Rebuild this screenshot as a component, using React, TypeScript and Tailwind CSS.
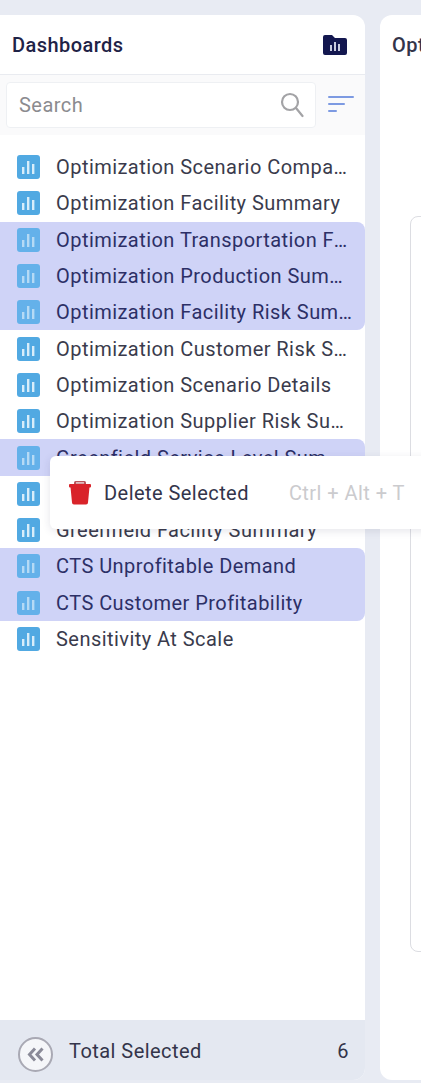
const DASHBOARDS = [
  { name: "Optimization Scenario Comparison", selected: false },
  { name: "Optimization Facility Summary", selected: false },
  { name: "Optimization Transportation Facilities", selected: true },
  { name: "Optimization Production Summary Report", selected: true },
  { name: "Optimization Facility Risk Summary Report", selected: true },
  { name: "Optimization Customer Risk Summary", selected: false },
  { name: "Optimization Scenario Details", selected: false },
  { name: "Optimization Supplier Risk Summary", selected: false },
  { name: "Greenfield Service Level Summary", selected: true },
  { name: "Greenfield Scenario Details", selected: false },
  { name: "Greenfield Facility Summary", selected: false },
  { name: "CTS Unprofitable Demand", selected: true },
  { name: "CTS Customer Profitability", selected: true },
  { name: "Sensitivity At Scale", selected: false },
];

function ChartTile({ selected }: { selected: boolean }) {
  return (
    <svg width="23" height="24" viewBox="0 0 23 24" className="shrink-0">
      <rect width="23" height="24" rx="3" fill={selected ? "#64b1ea" : "#51a9e2"} />
      <g fill={selected ? "#b5daf5" : "#d8edfa"}>
        <rect x="5" y="12" width="2.4" height="7" />
        <rect x="10" y="6" width="2.4" height="13" />
        <rect x="15" y="9" width="2.4" height="10" />
      </g>
    </svg>
  );
}

export default function App() {
  return (
    <div className="relative flex h-[1083px] w-[421px] gap-[15px] overflow-hidden bg-[#e8ebf3] pb-[3px] pt-[15px] font-['Roboto',sans-serif] tracking-[0.45px]">
      {/* Dashboards panel */}
      <div className="flex w-[365px] shrink-0 flex-col overflow-hidden rounded-r-xl bg-white">
        <div className="flex h-[60px] shrink-0 items-center justify-between border-b border-[#e9ebf0] pl-3 pr-[18px]">
          <h2 className="text-[20px] font-medium text-[#1f2347]">Dashboards</h2>
          <svg width="24" height="20" viewBox="0 0 24 20">
            <path d="M0 2a2 2 0 0 1 2-2h7l3 3h10a2 2 0 0 1 2 2v13a2 2 0 0 1-2 2H2a2 2 0 0 1-2-2z" fill="#13174f" />
            <g fill="#c9cce0">
              <rect x="7" y="10" width="2" height="6" />
              <rect x="11" y="7" width="2" height="9" />
              <rect x="15" y="9" width="2" height="7" />
            </g>
          </svg>
        </div>

        <div className="flex h-[60px] shrink-0 items-center bg-[#fafafb] pl-[6px] pr-[10px]">
          <div className="flex h-[46px] w-[310px] items-center justify-between rounded border border-[#eef0f3] bg-white pl-3 pr-[11px]">
            <span className="text-[20px] text-[#8b8b8f]">Search</span>
            <svg width="24" height="26" viewBox="0 0 24 26" fill="none" stroke="#a3a3a6" strokeWidth="2.2">
              <circle cx="10" cy="10" r="8" />
              <path d="M16 16l6.500 8" strokeLinecap="round" />
            </svg>
          </div>
          <svg width="26" height="18" viewBox="0 0 26 18" className="ml-[12px]" fill="#7d9ae2">
            <rect width="26" height="2" rx="1" />
            <rect y="7" width="17" height="2" rx="1" />
            <rect y="14" width="9" height="2" rx="1" />
          </svg>
        </div>

        <ul className="mt-[14px] flex-1">
          {DASHBOARDS.map((d, i) => {
            const prev = DASHBOARDS[i - 1]?.selected;
            const next = DASHBOARDS[i + 1]?.selected;
            return (
              <li
                key={d.name}
                className={`flex h-[36.3px] items-center gap-[16px] pl-[17px] pr-[12px] ${
                  d.selected ? "bg-[#cfd3f7] text-[#2c2f66]" : "text-[#3a3b4c]"
                } ${d.selected && !prev ? "rounded-tr-lg" : ""} ${d.selected && !next ? "rounded-br-lg" : ""}`}
              >
                <ChartTile selected={d.selected} />
                <span className="truncate text-[20px] leading-[26px]">{d.name}</span>
              </li>
            );
          })}
        </ul>

        <div className="flex h-[60px] shrink-0 items-center bg-[#e4e8f1] pl-[18px] pr-[16px]">
          <div className="mt-[9px] flex h-[35px] w-[35px] items-center justify-center rounded-full border-2 border-[#a9a9b4] bg-[#f5f6f9]">
            <svg width="18" height="15" viewBox="0 0 18 15" fill="none" stroke="#8a8a98" strokeWidth="3">
              <path d="M8 1.500L2.500 7.500 8 13.500M15.500 1.500L10 7.500l5.500 6" />
            </svg>
          </div>
          <span className="ml-[16px] flex-1 pt-[2px] text-[20px] text-[#33344a]">Total Selected</span>
          <span className="pt-[2px] text-[20px] text-[#33344a]">6</span>
        </div>
      </div>

      {/* Main panel */}
      <div className="flex min-w-[300px] flex-col rounded-l-xl bg-white pl-3">
        <div className="flex h-[60px] items-center text-[20px] font-medium text-[#33344a]">Optimization</div>
        <div className="ml-[18px] mt-[141px] h-[736px] rounded-l-lg border border-[#dcdde2]" />
      </div>

      {/* Context menu */}
      <div className="absolute left-[50px] top-[456px] flex h-[73px] w-[420px] items-center rounded-md bg-white pl-[18px] shadow-[0_2px_8px_rgba(40,45,80,0.12)]">
        <svg width="24" height="25" viewBox="0 0 24 25" fill="#d9232a">
          <path d="M6 4V2.500A1.500 1.500 0 0 1 7.500 1h9A1.500 1.500 0 0 1 18 2.500V4z" fill="#b9555a" />
          <rect x="8" y="2.200" width="8" height="1.400" fill="#e8d5d6" />
          <rect x="1" y="4" width="22" height="3.500" rx="1" />
          <path d="M2.500 7h19L20 22.500a2 2 0 0 1-2 2H6a2 2 0 0 1-2-2z" />
        </svg>
        <span className="ml-[12px] text-[20px] text-[#33344a]">Delete Selected</span>
        <span className="ml-[40px] text-[20px] text-[#cbcbce]">Ctrl + Alt + T</span>
      </div>
    </div>
  );
}
